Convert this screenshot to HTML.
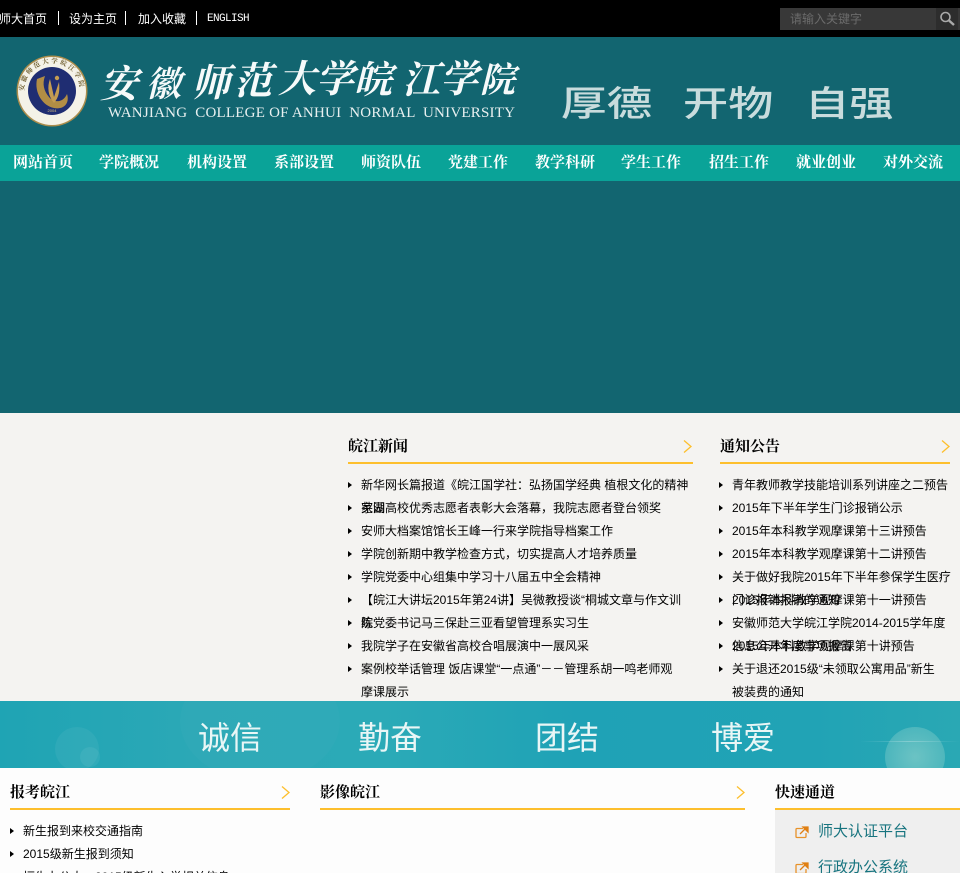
<!DOCTYPE html>
<html lang="zh"><head><meta charset="utf-8"><title>安徽师范大学皖江学院</title>
<style>
*{margin:0;padding:0;box-sizing:border-box}
html,body{width:960px;height:873px;overflow:hidden;background:#fdfdfd}
body{position:relative;font:12px/23px "Liberation Serif","Noto Serif CJK SC",serif;color:#000}
.a{position:absolute;white-space:nowrap}
ul{list-style:none;position:absolute;font-family:"Liberation Sans","WenQuanYi Zen Hei","Noto Sans CJK SC",sans-serif}
li{height:23px;line-height:23px;padding-left:13px;position:relative;white-space:nowrap}
li:before{content:"";position:absolute;left:0;top:8px;border-left:4px solid #000;border-top:3px solid transparent;border-bottom:3px solid transparent}
.t{position:absolute;font-size:15px;font-weight:bold;line-height:20px;white-space:nowrap}
.l{position:absolute;height:2px;background:#fdbf2d}
.nav{position:absolute;top:145px;left:0;width:960px;height:36px;background:#0aa398}
.nav span{position:absolute;top:8px;font-size:15px;line-height:20px;font-weight:bold;color:#fff;white-space:nowrap}
.top{color:#fff;line-height:16px;top:11px;font-family:"WenQuanYi Zen Hei","Noto Sans CJK SC",sans-serif}
.sep{position:absolute;top:11px;width:1px;height:14px;background:#fff}
.q{position:absolute;left:818px;font-size:15px;line-height:20px;color:#17747f;white-space:nowrap;font-family:"WenQuanYi Zen Hei","Noto Sans CJK SC",sans-serif}
.band{font:32px/40px "WenQuanYi Zen Hei","Noto Sans CJK SC",sans-serif;color:#e9f6f6;top:716px}
</style></head><body>
<div class="a" style="left:0;top:0;width:960px;height:37px;background:#000"></div>
<div class="a top" style="left:-1px">师大首页</div><div class="sep" style="left:58px"></div>
<div class="a top" style="left:69px">设为主页</div><div class="sep" style="left:125px"></div>
<div class="a top" style="left:138px">加入收藏</div><div class="sep" style="left:196px"></div>
<div class="a top" style="left:207px;font:11px/16px 'Liberation Mono',monospace;width:43px;letter-spacing:-.6px">ENGLISH</div>
<div class="a" style="left:780px;top:8px;width:180px;height:22px;background:#383838"></div>
<div class="a" style="left:936px;top:8px;width:22px;height:22px;background:#2d2d2d"></div>
<div class="a" style="left:790px;top:10px;line-height:18px;color:#6b6b6b;font-family:'WenQuanYi Zen Hei','Noto Sans CJK SC',sans-serif">请输入关键字</div>
<svg class="a" style="left:938px;top:9px" width="20" height="20" viewBox="0 0 20 20"><circle cx="7.500" cy="8" r="4.500" fill="none" stroke="#a9a9a9" stroke-width="1.600"/><path d="M11 11.500L16 16" stroke="#a9a9a9" stroke-width="2.400"/></svg>

<div class="a" style="left:0;top:37px;width:960px;height:376px;background:#126570"></div>
<svg class="a" style="left:0;top:37px" width="960" height="108" viewBox="0 0 960 108">
<circle cx="52" cy="54" r="35.500" fill="#a98c4c"/><circle cx="52" cy="54" r="34" fill="#f4f2e8"/>
<circle cx="52" cy="54" r="24" fill="#1f2d72"/>
<path d="M37 42C34 56 43 69 54 71C64 73 70 66 67 57C63 66 54 66 49 60C44 54 42 47 45 39Z" fill="#b18d45"/>
<path d="M50 42L54 60L59 45C60 54 59 60 54 66C48 59 47 50 50 42Z" fill="#c49c52"/><circle cx="57" cy="41" r="2.200" fill="#c49c52"/>
<text x="52" y="75" font-size="4" fill="#d9c27e" text-anchor="middle" font-family="Liberation Sans">2004</text>
<path id="ra" d="M24 54A28 28 0 0 1 80 54" fill="none"/>
<text font-size="6.500" fill="#6b5a2a" font-weight="bold" font-family="Noto Serif CJK SC,serif"><textPath href="#ra" textLength="84">安徽师范大学皖江学院</textPath></text>
<g fill="#f6fafa" font-family="Noto Serif CJK SC,serif" font-weight="bold" font-size="38" font-style="italic">
<text x="100" y="60">安</text><text x="146" y="59" font-size="35">徽</text><text x="192" y="59">师</text><text x="234" y="57">范</text><text x="278" y="55">大</text><text x="316" y="55">学</text><text x="354" y="56">皖</text><text x="402" y="56">江</text><text x="440" y="55">学</text><text x="480" y="55" font-size="35">院</text>
</g>
<text x="108" y="80" font-family="Liberation Serif,serif" font-size="15" fill="#e8f0f0" textLength="407" xml:space="preserve">WANJIANG  COLLEGE OF ANHUI  NORMAL  UNIVERSITY</text>
<g fill="#c9dcdd" font-family="Noto Sans CJK SC,sans-serif" font-weight="500" font-size="43">
<text transform="translate(561 79) scale(1.060 .82)">厚德</text>
<text transform="translate(683 79) scale(1.050 .82)">开物</text>
<text transform="translate(805 79) scale(1.030 .82)">自强</text></g>
</svg>

<div class="nav">
<span style="left:13px">网站首页</span><span style="left:99px">学院概况</span><span style="left:187px">机构设置</span><span style="left:274px">系部设置</span><span style="left:361px">师资队伍</span><span style="left:448px">党建工作</span><span style="left:535px">教学科研</span><span style="left:621px">学生工作</span><span style="left:709px">招生工作</span><span style="left:796px">就业创业</span><span style="left:883px">对外交流</span>
</div>

<div class="a" style="left:0;top:413px;width:960px;height:288px;background:#f4f3f1"></div>
<div class="t" style="left:348px;top:437px">皖江新闻</div><div class="l" style="left:348px;top:462px;width:345px"></div>
<svg class="a" style="left:683px;top:440px" width="10" height="13"><path d="M1 .5L8 6.500L1 12.500" fill="none" stroke="#fdbf2d" stroke-width="1.300"/></svg>
<div class="t" style="left:720px;top:437px">通知公告</div><div class="l" style="left:720px;top:462px;width:230px"></div>
<svg class="a" style="left:941px;top:440px" width="10" height="13"><path d="M1 .5L8 6.500L1 12.500" fill="none" stroke="#fdbf2d" stroke-width="1.300"/></svg>

<ul style="left:348px;top:474px">
<li>新华网长篇报道《皖江国学社：弘扬国学经典 植根文化的精神<br>家园</li>
<li>芜湖高校优秀志愿者表彰大会落幕，我院志愿者登台领奖</li>
<li>安师大档案馆馆长王峰一行来学院指导档案工作</li>
<li>学院创新期中教学检查方式，切实提高人才培养质量</li>
<li>学院党委中心组集中学习十八届五中全会精神</li>
<li>【皖江大讲坛2015年第24讲】吴微教授谈“桐城文章与作文训<br>练</li>
<li>院党委书记马三保赴三亚看望管理系实习生</li>
<li>我院学子在安徽省高校合唱展演中一展风采</li>
<li>案例校举话管理 饭店课堂“一点通”－－管理系胡一鸣老师观<br>摩课展示</li>
</ul>
<ul style="left:719px;top:474px">
<li>青年教师教学技能培训系列讲座之二预告</li>
<li>2015年下半年学生门诊报销公示</li>
<li>2015年本科教学观摩课第十三讲预告</li>
<li>2015年本科教学观摩课第十二讲预告</li>
<li>关于做好我院2015年下半年参保学生医疗<br>门诊报销报销的通知</li>
<li>2015年本科教学观摩课第十一讲预告</li>
<li>安徽师范大学皖江学院2014-2015学年度<br>信息公开年度事项报告</li>
<li>2015年本科教学观摩课第十讲预告</li>
<li>关于退还2015级“未领取公寓用品”新生<br>被装费的通知</li>
</ul>

<div class="a" style="left:0;top:701px;width:960px;height:67px;overflow:hidden;background:linear-gradient(90deg,#1fa4b4 0,#2ba8b6 20%,#2baab7 40%,#1fa2b6 60%,#21a3b5 85%,#2aa8b4 100%)">
<div class="a" style="left:55px;top:26px;width:44px;height:44px;border-radius:50%;background:rgba(255,255,255,.05)"></div>
<div class="a" style="left:80px;top:46px;width:20px;height:20px;border-radius:50%;background:rgba(255,255,255,.06)"></div>
<div class="a" style="left:180px;top:-40px;width:160px;height:120px;border-radius:50%;background:rgba(255,255,255,.02)"></div>
<div class="a" style="left:885px;top:26px;width:60px;height:60px;border-radius:50%;background:radial-gradient(circle,rgba(190,230,215,.45),rgba(190,230,215,.25) 70%,rgba(190,230,215,0))"></div>
<div class="a" style="left:860px;top:40px;width:100px;height:1px;background:linear-gradient(90deg,rgba(255,255,255,0),rgba(255,255,255,.25),rgba(255,255,255,0))"></div>
</div>
<div class="a band" style="left:198px">诚信</div>
<div class="a band" style="left:358px">勤奋</div>
<div class="a band" style="left:535px">团结</div>
<div class="a band" style="left:711px">博爱</div>

<div class="t" style="left:10px;top:783px">报考皖江</div><div class="l" style="left:10px;top:808px;width:280px"></div>
<svg class="a" style="left:281px;top:786px" width="10" height="13"><path d="M1 .5L8 6.500L1 12.500" fill="none" stroke="#fdbf2d" stroke-width="1.300"/></svg>
<div class="t" style="left:320px;top:783px">影像皖江</div><div class="l" style="left:320px;top:808px;width:425px"></div>
<svg class="a" style="left:736px;top:786px" width="10" height="13"><path d="M1 .5L8 6.500L1 12.500" fill="none" stroke="#fdbf2d" stroke-width="1.300"/></svg>
<div class="t" style="left:775px;top:783px">快速通道</div><div class="l" style="left:775px;top:808px;width:185px"></div>
<ul style="left:10px;top:820px">
<li>新生报到来校交通指南</li>
<li>2015级新生报到须知</li>
<li>恒生办公大一2015级新生入学相关信息</li>
</ul>
<div class="a" style="left:775px;top:810px;width:185px;height:63px;background:#efefef"></div>
<svg class="a" style="left:795px;top:826px" width="14" height="13"><path d="M8 2.500H2Q1 2.500 1 3.500V10.500Q1 11.500 2 11.500H10Q11 11.500 11 10.500V7" fill="none" stroke="#e8922a" stroke-width="1.300"/><path d="M5 8L10 3M8 1H13V6Z" stroke="#e07f12" stroke-width="1.300" fill="#e07f12"/></svg>
<div class="q" style="top:821px">师大认证平台</div>
<svg class="a" style="left:795px;top:862px" width="14" height="13"><path d="M8 2.500H2Q1 2.500 1 3.500V10.500Q1 11.500 2 11.500H10Q11 11.500 11 10.500V7" fill="none" stroke="#e8922a" stroke-width="1.300"/><path d="M5 8L10 3M8 1H13V6Z" stroke="#e07f12" stroke-width="1.300" fill="#e07f12"/></svg>
<div class="q" style="top:857px">行政办公系统</div>
</body></html>
